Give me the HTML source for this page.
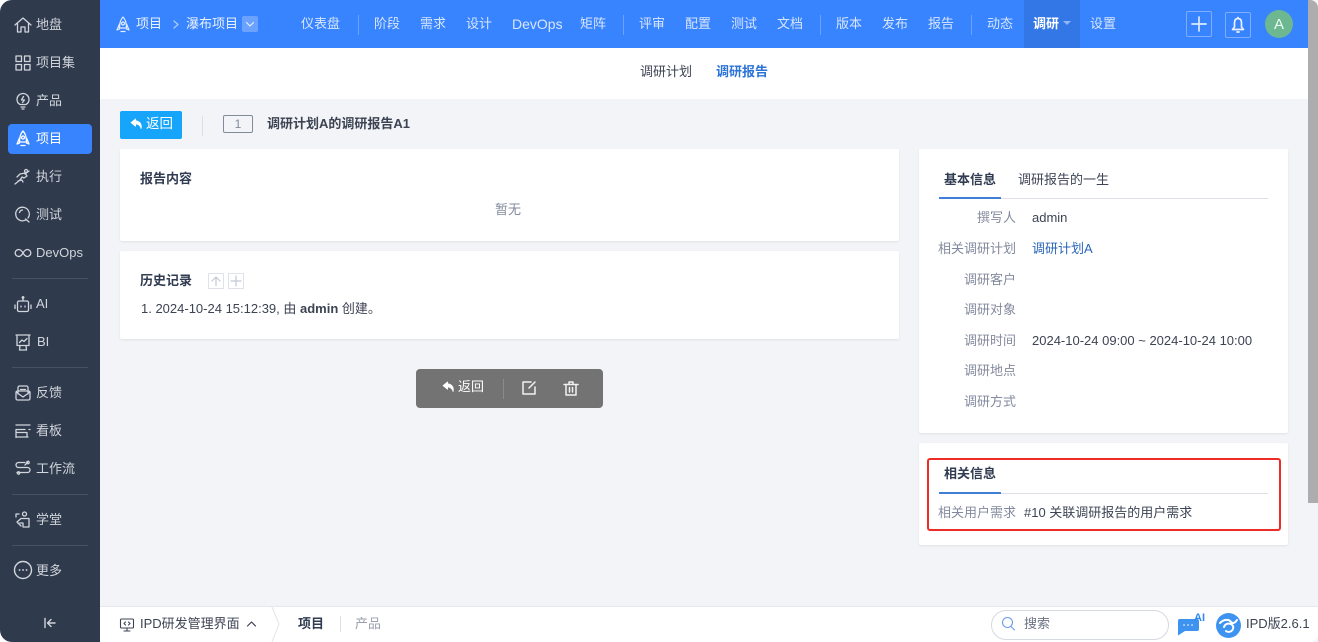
<!DOCTYPE html>
<html lang="zh"><head><meta charset="utf-8"><title>调研报告</title>
<style>
*{box-sizing:border-box}
html,body{margin:0;padding:0;width:1318px;height:642px;overflow:hidden;background:#fff}
body{font:13px/20px "Liberation Sans","Noto Sans CJK SC",sans-serif;color:#313c52;position:relative}
.a{position:absolute;white-space:nowrap}
#side{left:0;top:0;width:100px;height:642px;background:#2f3a4c;border-radius:12px 0 0 12px}
.s{position:absolute;left:36px;color:#d1d5dc;font-size:13px;line-height:20px;white-space:nowrap}
.sep{position:absolute;left:12px;width:76px;height:1px;background:#465163}
svg{position:absolute;overflow:visible;fill:none;stroke-linecap:round;stroke-linejoin:round}
.si{stroke:#d1d5dc;stroke-width:1.3}
#top{left:100px;top:0;width:1208px;height:48px;background:#3883fe}
.n{position:absolute;top:14px;color:#d7e6ff;font-size:13px;line-height:20px;white-space:nowrap}
.d{position:absolute;top:15px;width:1px;height:20px;background:#6aa2fe}
.card{position:absolute;background:#fff;border-radius:2px;box-shadow:0 1px 2px rgba(0,0,0,.08)}
.l{position:absolute;left:919px;width:97px;text-align:right;color:#838a9d;line-height:20px;white-space:nowrap}
.v{position:absolute;left:1032px;line-height:20px;color:#3c4353;white-space:nowrap}
</style></head><body>
<div class="a" style="left:100px;top:48px;width:1208px;height:558px;background:#f3f4f7"></div>
<div class="a" style="left:1308px;top:0;width:10px;height:642px;background:#f3f4f7"></div>
<div class="a" style="left:1308px;top:0;width:10px;height:503px;background:#adadb0;border-radius:0 8px 0 0"></div>

<div class="a" id="side">
<svg class="si" style="left:14px;top:16px" width="18" height="18" viewBox="0 0 18 18"><path d="M1 9 9 2l8 7M3.500 7.500V16h3.500v-5h4v5h3.500V7.500"/></svg>
<div class="s" style="top:15px">地盘</div>
<svg class="si" style="left:15px;top:55px" width="16" height="16" viewBox="0 0 16 16"><rect x="1" y="1" width="5.500" height="5.500"/><rect x="9.500" y="1" width="5.500" height="5.500"/><rect x="1" y="9.500" width="5.500" height="5.500"/><rect x="9.500" y="9.500" width="5.500" height="5.500"/></svg>
<div class="s" style="top:53px">项目集</div>
<svg class="si" style="left:16px;top:92px" width="14" height="18" viewBox="0 0 14 18"><path d="M4 12.500C2 11.400 1 9.500 1 7.500a6 6 0 0 1 12 0c0 2-1 3.900-3 5zM5 15h4M6 17h2M7.500 4.500 5.500 8H8.500L6.500 10.500"/></svg>
<div class="s" style="top:91px">产品</div>
<div class="a" style="left:8px;top:124px;width:84px;height:30px;background:#3883fe;border-radius:4px"></div>
<svg style="left:16px;top:130px;stroke:#fff;stroke-width:1.300" width="14" height="17" viewBox="0 0 14 17"><path d="M7 1C4.500 3.500 3.500 7 3.500 12h7C10.500 7 9.500 3.500 7 1zM3.500 8 1 14l2.500-1M10.500 8 13 14l-2.500-1M5 15.500h4"/><circle cx="7" cy="7.500" r="1.500"/></svg>
<div class="s" style="top:129px;color:#fff">项目</div>
<svg class="si" style="left:14px;top:168px" width="17" height="17" viewBox="0 0 17 17"><path d="M1 16 6 12l2-3M3 9l3-3 5-1 2 3-3 2-2-1M4 13 8 12l1 2M12 1.500a1.500 1.500 0 1 0 .1 0M11 6 15 3"/></svg>
<div class="s" style="top:167px">执行</div>
<svg class="si" style="left:15px;top:206px" width="16" height="17" viewBox="0 0 16 17"><path d="M11.500 13.500 A6.800 6.800 0 1 1 13 12M10.500 13 14 16M4.500 6.500a3.500 3.500 0 0 1 3-2.500"/></svg>
<div class="s" style="top:205px">测试</div>
<svg class="si" style="left:14px;top:248px" width="18" height="10" viewBox="0 0 18 10"><path d="M9 5C7.500 2.500 6.300 1.500 4.700 1.500a3.500 3.500 0 0 0 0 7C6.300 8.500 7.500 7.500 9 5c1.500-2.500 2.700-3.500 4.300-3.500a3.500 3.500 0 0 1 0 7C11.700 8.500 10.500 7.500 9 5z"/></svg>
<div class="s" style="top:243px">DevOps</div>
<div class="sep" style="top:278px"></div>
<svg class="si" style="left:14px;top:296px" width="18" height="17" viewBox="0 0 18 17"><rect x="3.500" y="5" width="11" height="10.500" rx="1.500"/><path d="M9 5V2M1 9v3.500M17 9v3.500M7 10v1M11 10v1"/><circle cx="9" cy="1.500" r=".8"/></svg>
<div class="s" style="top:294px">AI</div>
<svg class="si" style="left:15px;top:334px" width="16" height="17" viewBox="0 0 16 17"><path d="M1 1h14M2 1v10.500h12V1M5 11.500 4.500 16h7L11 11.500M4.500 8.500 7 6l2 1.500 3-3"/></svg>
<div class="s" style="top:332px;left:37px">BI</div>
<div class="sep" style="top:367px"></div>
<svg class="si" style="left:15px;top:385px" width="16" height="16" viewBox="0 0 16 16"><rect x="1" y="6" width="14" height="9" rx="1.500"/><path d="M3 9V2.500A1.500 1.500 0 0 1 4.500 1h7A1.500 1.500 0 0 1 13 2.500V9M1 7l7 5 7-5M5.500 4.500h5"/></svg>
<div class="s" style="top:383px">反馈</div>
<svg class="si" style="left:15px;top:424px" width="16" height="14" viewBox="0 0 16 14"><path d="M1 1h14M1 5.500h9M15 5.500h-1M1 13h12M1 8.500h11v4.500M1 5.500v8"/></svg>
<div class="s" style="top:421px">看板</div>
<svg class="si" style="left:15px;top:460px" width="16" height="16" viewBox="0 0 16 16"><path d="M10 2.500H3.500a2.500 2.500 0 0 0 0 5h9a2.500 2.500 0 0 1 0 5H5M10 5 12.500 2.500M2 12.500l3 0"/><circle cx="13" cy="2.500" r="1.200"/><circle cx="3.500" cy="13" r="1.200"/></svg>
<div class="s" style="top:459px">工作流</div>
<div class="sep" style="top:494px"></div>
<svg class="si" style="left:15px;top:511px" width="16" height="17" viewBox="0 0 16 17"><circle cx="9.500" cy="3" r="2"/><path d="M1 3h3M1 3v3M6 15l-4-4 4-3.500h8V16H8V12H5"/></svg>
<div class="s" style="top:510px">学堂</div>
<div class="sep" style="top:545px"></div>
<svg style="left:14px;top:561px;stroke:#d1d5dc;stroke-width:1.400" width="18" height="18" viewBox="0 0 18 18"><circle cx="9" cy="9" r="8.500"/><path d="M5.500 9h.1M9 9h.1M12.500 9h.1" stroke-width="1.800"/></svg>
<div class="s" style="top:561px">更多</div>
<svg style="left:44px;top:617px;stroke:#d1d5dc;stroke-width:1.400" width="12" height="12" viewBox="0 0 12 12"><path d="M1 1.500v9M11 6H4M7 2.500 3.500 6 7 9.500"/></svg>
</div>

<div class="a" id="top">
<svg style="left:16px;top:16px;stroke:#e3edff;stroke-width:1.200" width="14" height="17" viewBox="0 0 14 17"><path d="M7 1C4.500 3.500 3.500 7 3.500 12h7C10.500 7 9.500 3.500 7 1zM3.500 8 1 14l2.500-1M10.500 8 13 14l-2.500-1M5 15.500h4"/><circle cx="7" cy="7.500" r="1.500"/></svg>
<div class="n" style="left:36px;color:#e9f1ff">项目</div>
<svg style="left:73px;top:20px;stroke:#a9caff;stroke-width:1.300" width="6" height="9" viewBox="0 0 6 9"><path d="M1 1l4 3.500L1 8"/></svg>
<div class="n" style="left:86px;color:#e9f1ff">瀑布项目</div>
<div class="a" style="left:142px;top:16px;width:16px;height:16px;background:#6aa2fe;border-radius:2px"></div>
<svg style="left:146px;top:22px;stroke:#e3edff;stroke-width:1.200" width="8" height="5" viewBox="0 0 8 5"><path d="M.5.500 4 4 7.500.500"/></svg>
<div class="n" style="left:201px">仪表盘</div><div class="d" style="left:258px"></div>
<div class="n" style="left:274px">阶段</div>
<div class="n" style="left:320px">需求</div>
<div class="n" style="left:366px">设计</div>
<div class="n" style="left:412px;font-size:14px">DevOps</div>
<div class="n" style="left:480px">矩阵</div><div class="d" style="left:523px"></div>
<div class="n" style="left:539px">评审</div>
<div class="n" style="left:585px">配置</div>
<div class="n" style="left:631px">测试</div>
<div class="n" style="left:677px">文档</div><div class="d" style="left:720px"></div>
<div class="n" style="left:736px">版本</div>
<div class="n" style="left:782px">发布</div>
<div class="n" style="left:828px">报告</div><div class="d" style="left:871px"></div>
<div class="n" style="left:887px">动态</div>
<div class="a" style="left:924px;top:0;width:56px;height:48px;background:#3377e6"></div>
<div class="n" style="left:933px;color:#fff;font-weight:bold">调研</div>
<div class="a" style="left:963px;top:21px;width:0;height:0;border:4px solid transparent;border-top-color:#8fb8fa;border-bottom:0"></div>
<div class="n" style="left:990px">设置</div>
<div class="a" style="left:1086px;top:11px;width:26px;height:26px;border:1px solid #7fadfa;border-radius:2px"></div>
<svg style="left:1092px;top:17px;stroke:#dde9ff;stroke-width:1.700" width="14" height="14" viewBox="0 0 14 14"><path d="M7 0v14M0 7h14"/></svg>
<div class="a" style="left:1125px;top:12px;width:26px;height:26px;border:1px solid #7fadfa;border-radius:2px"></div>
<svg style="left:1131px;top:17px;stroke:#eaf2ff;stroke-width:1.700" width="14" height="16" viewBox="0 0 14 16"><path d="M7 1.500C4.500 1.500 3.500 3.500 3.500 6v4L1.500 12.500h11l-2-2.500V6c0-2.500-1-4.500-3.500-4.500zM6 15h2M7 .5v1"/></svg>
<div class="a" style="left:1165px;top:10px;width:28px;height:28px;border-radius:50%;background:#6db791;color:#eafff2;font-size:15px;line-height:30px;text-align:center">A</div>
</div>

<div class="a" style="left:100px;top:48px;width:1208px;height:51px;background:#fff"></div>
<div class="a" style="left:640px;top:62px;color:#3c4353">调研计划</div>
<div class="a" style="left:716px;top:62px;color:#2c73d8;font-weight:bold">调研报告</div>

<div class="a" style="left:120px;top:111px;width:62px;height:28px;background:#16a5fb;border-radius:2px"></div>
<svg style="left:130px;top:118px;fill:#fff;stroke:#fff;stroke-width:.8" width="13" height="12" viewBox="0 0 14 13"><path d="M6 1 1 5l5 4V6.500c3 0 5 1.500 6 5 1-4.500-1-8-6-8.500z"/></svg>
<div class="a" style="left:146px;top:114px;color:#fff;font-size:13.500px">返回</div>
<div class="a" style="left:202px;top:116px;width:1px;height:20px;background:#dcdfe5"></div>
<div class="a" style="left:223px;top:115px;width:30px;height:18px;border:1px solid #838a9d;border-radius:2px;color:#838a9d;font-size:12px;line-height:16px;text-align:center">1</div>
<div class="a" style="left:267px;top:114px;font-weight:bold;color:#3c4353">调研计划A的调研报告A1</div>

<div class="card" style="left:120px;top:149px;width:779px;height:92px"></div>
<div class="a" style="left:140px;top:169px;font-weight:bold">报告内容</div>
<div class="a" style="left:495px;top:200px;color:#838a9d">暂无</div>

<div class="card" style="left:120px;top:251px;width:779px;height:88px"></div>
<div class="a" style="left:140px;top:271px;font-weight:bold">历史记录</div>
<div class="a" style="left:208px;top:273px;width:16px;height:16px;border:1px solid #dfe2e8"></div>
<svg style="left:211px;top:276px;stroke:#c3c8d2;stroke-width:1.200" width="10" height="10" viewBox="0 0 10 10"><path d="M5 9.500V1M1 5l4-4 4 4"/></svg>
<div class="a" style="left:228px;top:273px;width:16px;height:16px;border:1px solid #dfe2e8"></div>
<svg style="left:231px;top:276px;stroke:#c3c8d2;stroke-width:1.200" width="10" height="10" viewBox="0 0 10 10"><path d="M5 0v10M0 5h10"/></svg>
<div class="a" style="left:141px;top:299px;color:#3c4353">1. 2024-10-24 15:12:39, 由 <b>admin</b> 创建。</div>

<div class="a" style="left:416px;top:369px;width:187px;height:39px;background:#727372;border-radius:4px"></div>
<svg style="left:442px;top:381px;fill:#fff;stroke:#fff;stroke-width:.8" width="13" height="12" viewBox="0 0 14 13"><path d="M6 1 1 5l5 4V6.500c3 0 5 1.500 6 5 1-4.500-1-8-6-8.500z"/></svg>
<div class="a" style="left:458px;top:377px;color:#fff">返回</div>
<div class="a" style="left:503px;top:379px;width:1px;height:20px;background:#8a8b8a"></div>
<svg style="left:522px;top:381px;stroke:#f1f1f1;stroke-width:1.500" width="14" height="14" viewBox="0 0 14 14"><path d="M9 1H1v12h12V6M13 1 7 7"/></svg>
<svg style="left:564px;top:381px;stroke:#f1f1f1;stroke-width:1.500" width="14" height="15" viewBox="0 0 14 15"><path d="M0 3.500h14M5 3.500V1h4v2.500M2 3.500V14h10V3.500M5.500 6.500V11M8.500 6.500V11"/></svg>

<div class="card" style="left:919px;top:149px;width:369px;height:284px"></div>
<div class="a" style="left:944px;top:170px;font-weight:bold">基本信息</div>
<div class="a" style="left:1018px;top:170px;color:#3c4353">调研报告的一生</div>
<div class="a" style="left:939px;top:198px;width:329px;height:1px;background:#dcdfe5"></div>
<div class="a" style="left:939px;top:197px;width:62px;height:2px;background:#3f7fd8"></div>
<div class="l" style="top:208px">撰写人</div><div class="v" style="top:208px">admin</div>
<div class="l" style="top:239px">相关调研计划</div><div class="v" style="top:239px;color:#2a66b8">调研计划A</div>
<div class="l" style="top:270px">调研客户</div>
<div class="l" style="top:300px">调研对象</div>
<div class="l" style="top:331px">调研时间</div><div class="v" style="top:331px">2024-10-24 09:00 ~ 2024-10-24 10:00</div>
<div class="l" style="top:361px">调研地点</div>
<div class="l" style="top:392px">调研方式</div>

<div class="card" style="left:919px;top:443px;width:369px;height:102px"></div>
<div class="a" style="left:944px;top:464px;font-weight:bold">相关信息</div>
<div class="a" style="left:939px;top:493px;width:329px;height:1px;background:#dcdfe5"></div>
<div class="a" style="left:939px;top:492px;width:62px;height:2px;background:#3f7fd8"></div>
<div class="l" style="top:503px">相关用户需求</div>
<div class="a" style="left:1024px;top:503px;color:#3c4353">#10 关联调研报告的用户需求</div>
<div class="a" style="left:927px;top:458px;width:354px;height:73px;border:2px solid #ee2b24;border-radius:3px"></div>

<div class="a" style="left:100px;top:606px;width:1218px;height:36px;background:#fff;border-top:1px solid #e6e8ec;border-radius:0 0 8px 0"></div>
<svg style="left:120px;top:618px;stroke:#3c4353;stroke-width:1.100" width="14" height="14" viewBox="0 0 14 14"><rect x=".5" y="1" width="13" height="9" rx="1"/><path d="M4 13h6M7 10v3M5.500 4 4 5.500 5.500 7M8.500 4 10 5.500 8.500 7"/></svg>
<div class="a" style="left:140px;top:614px;color:#3c4353">IPD研发管理界面</div>
<svg style="left:247px;top:621px;stroke:#3c4353;stroke-width:1.200" width="9" height="6" viewBox="0 0 9 6"><path d="M.5 5 4.500 1 8.500 5"/></svg>
<svg style="left:272px;top:607px;stroke:#e3e5ea;stroke-width:1" width="8" height="35" viewBox="0 0 8 35"><path d="M0 0l7 17L0 35"/></svg>
<div class="a" style="left:298px;top:614px;font-weight:bold">项目</div>
<div class="a" style="left:340px;top:616px;width:1px;height:16px;background:#dcdfe5"></div>
<div class="a" style="left:355px;top:614px;color:#9aa0ae">产品</div>
<div class="a" style="left:991px;top:610px;width:178px;height:30px;border:1px solid #d5d9e0;border-radius:15px;background:#fff"></div>
<svg style="left:1002px;top:617px;stroke:#6a9fe8;stroke-width:1.100" width="13" height="14" viewBox="0 0 13 14"><circle cx="5.500" cy="5.500" r="5"/><path d="M9 9.500l3.500 3.500"/></svg>
<div class="a" style="left:1024px;top:614px;color:#6b7282">搜索</div>
<svg style="left:1176px;top:617px" width="24" height="19" viewBox="0 0 24 19"><path d="M3 2h18a2 2 0 0 1 2 2v8a2 2 0 0 1-2 2H9l-7 4.500V4a2 2 0 0 1 1-2z" fill="#3f93f0"/><path d="M8 8h.1M12 8h.1M16 8h.1" stroke="#fff" stroke-width="1.500"/></svg>
<div class="a" style="left:1194px;top:611px;color:#2f88ee;font-size:11px;line-height:14px;font-weight:bold">AI</div>
<svg style="left:1216px;top:613px" width="25" height="25" viewBox="0 0 25 25"><circle cx="12.500" cy="12.500" r="12.500" fill="#3f93f0"/><path d="M4 10c4-4 9-4 11-1 2 2 4 1 6-2M8 14a5 5 0 0 1 9-1 4.500 4.500 0 0 1-7 5" stroke="#fff" stroke-width="2"/></svg>
<div class="a" style="left:1246px;top:614px;color:#3c4353">IPD版2.6.1</div>
</body></html>
